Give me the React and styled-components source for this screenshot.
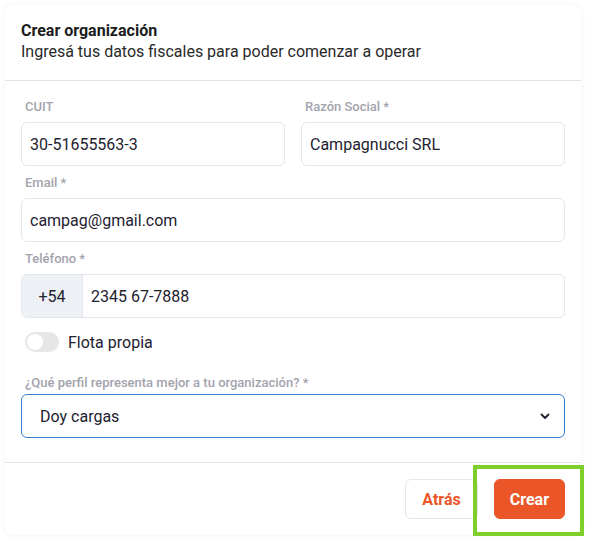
import styled, { createGlobalStyle } from "styled-components";

const GlobalStyle = createGlobalStyle`
  body {
    margin: 0;
    background: #ffffff;
    font-family: Roboto, "Liberation Sans", sans-serif;
  }
`;

const Page = styled.div`
  padding: 5px 15px 7px 5px;
`;

const Card = styled.div`
  position: relative;
  width: 576px;
  background: #fff;
  border-radius: 8px;
  box-shadow: 0 0 6px rgba(0, 0, 0, 0.06);
`;

const Header = styled.div`
  padding: 15px 16px 18px;
  border-bottom: 1px solid #e3e3e3;
`;

const Title = styled.h2`
  margin: 0;
  font-size: 16px;
  line-height: 21px;
  font-weight: 700;
  color: #1c1c1c;
`;

const Subtitle = styled.p`
  margin: 0;
  font-size: 16px;
  line-height: 21px;
  color: #2a2a2a;
`;

const Body = styled.div`
  padding: 18px 16px 24px;
  display: flex;
  flex-direction: column;
  gap: 9px;
`;

const Row = styled.div`
  display: grid;
  grid-template-columns: 1fr 1fr;
  gap: 16px;
`;

const Field = styled.div`
  display: flex;
  flex-direction: column;
`;

const Label = styled.label`
  font-size: 13px;
  line-height: 16px;
  font-weight: 500;
  color: #a3a3ad;
  padding-left: 4px;
  margin-bottom: ${(p) => (p.$tight ? "3px" : "7px")};
`;

const Input = styled.div`
  height: 44px;
  box-sizing: border-box;
  border: 1px solid ${(p) => (p.$focus ? "#3a7fcb" : "#e2e6ee")};
  border-radius: 6px;
  display: flex;
  align-items: center;
  padding: 0 ${(p) => (p.$focus ? "13px" : "9px")} 0 ${(p) => (p.$focus ? "18px" : "8px")};
  font-size: 16px;
  color: #1e2230;
  overflow: hidden;
`;

const Prefix = styled.div`
  align-self: stretch;
  width: 60px;
  margin-left: -8px;
  margin-right: 8px;
  background: #edf1f6;
  border-right: 1px solid #e2e6ee;
  display: flex;
  align-items: center;
  justify-content: center;
`;

const Grow = styled.span`
  flex: 1;
`;

const ToggleRow = styled.div`
  display: flex;
  align-items: center;
  gap: 9px;
  padding: 5px 0 14px 4px;
  font-size: 16px;
  color: #1e2230;
`;

const Switch = styled.div`
  width: 34px;
  height: 20px;
  border-radius: 10px;
  background: #e6e6e6;
  position: relative;
  &::after {
    content: "";
    position: absolute;
    left: 2px;
    top: 2px;
    width: 16px;
    height: 16px;
    border-radius: 50%;
    background: #fff;
  }
`;

const Footer = styled.div`
  border-top: 1px solid #e3e3e3;
  padding: 16px 16px 16px;
  display: flex;
  justify-content: flex-end;
  gap: 16px;
`;

const Button = styled.button`
  height: 40px;
  padding: 0 ${(p) => (p.$primary ? "15px" : "16px")};
  border-radius: 6px;
  font-family: inherit;
  font-size: 16px;
  font-weight: 700;
  border: 1px solid ${(p) => (p.$primary ? "#ea5628" : "#e2e6ee")};
  background: ${(p) => (p.$primary ? "#ea5628" : "#fff")};
  color: ${(p) => (p.$primary ? "#fff" : "#ea5628")};
`;

const Highlight = styled.div`
  position: absolute;
  left: 468px;
  top: 460px;
  width: 111px;
  height: 71px;
  box-sizing: border-box;
  border: 4px solid #7fcf2a;
  pointer-events: none;
`;

const Chevron = () => (
  <svg width="12" height="12" viewBox="0 0 12 12" fill="none">
    <path d="M2.5 4.5L6 8l3.5-3.5" stroke="#1e2230" strokeWidth="1.8" strokeLinecap="round" strokeLinejoin="round" />
  </svg>
);

const App = () => {
  return (
    <Page>
      <GlobalStyle />
      <Card>
        <Header>
          <Title>Crear organización</Title>
          <Subtitle>Ingresá tus datos fiscales para poder comenzar a operar</Subtitle>
        </Header>
        <Body>
          <Row>
            <Field>
              <Label>CUIT</Label>
              <Input>30-51655563-3</Input>
            </Field>
            <Field>
              <Label>Razón Social *</Label>
              <Input>Campagnucci SRL</Input>
            </Field>
          </Row>
          <Field>
            <Label>Email *</Label>
            <Input>campag@gmail.com</Input>
          </Field>
          <Field>
            <Label>Teléfono *</Label>
            <Input>
              <Prefix>+54</Prefix>
              2345 67-7888
            </Input>
          </Field>
          <ToggleRow>
            <Switch />
            Flota propia
          </ToggleRow>
          <Field>
            <Label $tight>¿Qué perfil representa mejor a tu organización? *</Label>
            <Input $focus>
              <Grow>Doy cargas</Grow>
              <Chevron />
            </Input>
          </Field>
        </Body>
        <Footer>
          <Button>Atrás</Button>
          <Button $primary>Crear</Button>
        </Footer>
        <Highlight />
      </Card>
    </Page>
  );
};

export default App;
